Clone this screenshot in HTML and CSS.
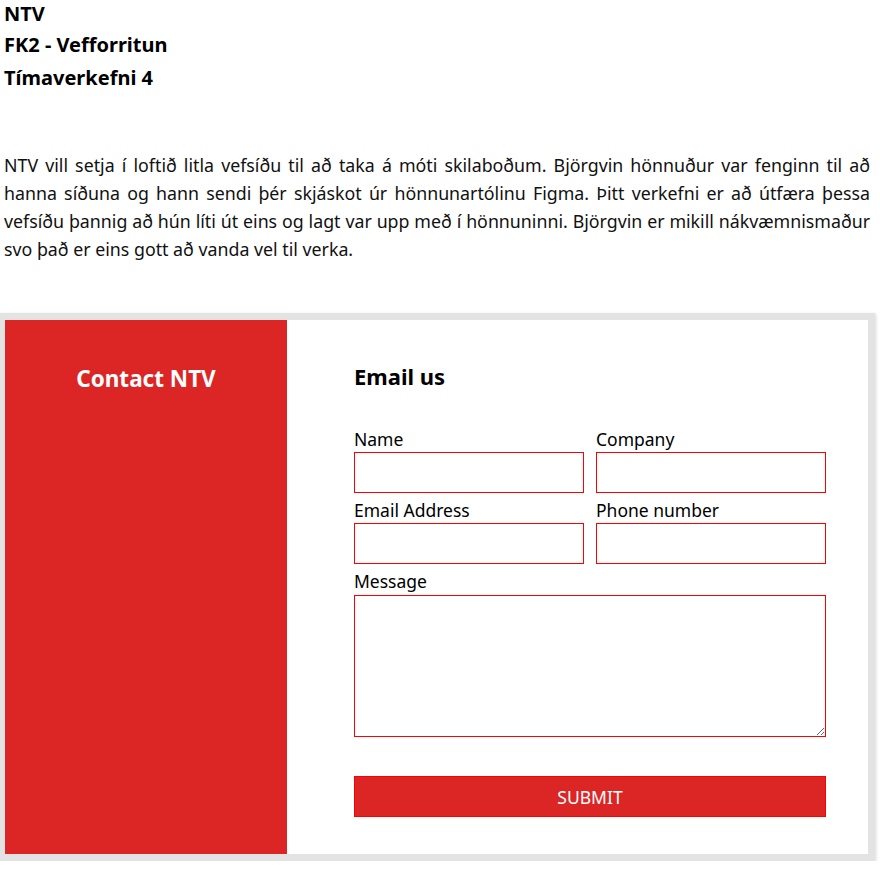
FILE: index.html
```html
<!DOCTYPE html>
<html lang="is">
<head>
<meta charset="utf-8">
<title>NTV</title>
<link rel="stylesheet" href="styles.css">
</head>
<body>
<header class="intro">
  <h1 class="title first">NTV</h1>
  <h2 class="title">FK2 - Vefforritun</h2>
  <h3 class="title">Tímaverkefni 4</h3>
  <p class="lead">NTV vill setja í loftið litla vefsíðu til að taka á móti skilaboðum. Björgvin hönnuður var fenginn til að hanna síðuna og hann sendi þér skjáskot úr hönnunartólinu Figma. Þitt verkefni er að útfæra þessa vefsíðu þannig að hún líti út eins og lagt var upp með í hönnuninni. Björgvin er mikill nákvæmnismaður svo það er eins gott að vanda vel til verka.</p>
</header>
<main class="card">
  <section class="side">
    <h2 class="side-title">Contact NTV</h2>
  </section>
  <section class="panel">
    <h2 class="panel-title">Email us</h2>
    <form class="form">
      <label class="field"><span class="label">Name</span><input class="input" type="text"></label>
      <label class="field"><span class="label">Company</span><input class="input" type="text"></label>
      <label class="field"><span class="label">Email Address</span><input class="input" type="email"></label>
      <label class="field"><span class="label">Phone number</span><input class="input" type="tel"></label>
      <label class="field wide"><span class="label">Message</span><textarea class="textarea"></textarea></label>
      <button class="submit" type="button">SUBMIT</button>
    </form>
  </section>
</main>
</body>
</html>
```
FILE: styles.css
```css
* { box-sizing: border-box; }
html, body { margin: 0; padding: 0; background: #fff; }
body {
  font-family: "Noto Sans", "Open Sans", sans-serif;
  color: #000;
  width: 880px;
}
.intro { padding: 0 10px 0 4px; }
.title {
  margin: 0;
  font-size: 20px;
  line-height: 33px;
  font-weight: 700;
}
.title.first {
  line-height: 27px;
  margin-bottom: 1px;
}
.lead {
  margin: 57px 0 0 0;
  font-size: 17.8px;
  line-height: 28px;
  text-align: justify;
  color: #111;
}
.card {
  margin-top: 50px;
  width: 875px;
  height: 548px;
  border: 7px solid #e3e3e3;
  border-left-width: 5px;
  box-shadow: 1px 1px 3px rgba(0,0,0,0.15);
  display: grid;
  grid-template-columns: 282px minmax(0, 1fr);
}
.side {
  background: #dc2626;
  display: flex;
  justify-content: center;
  padding-top: 44px;
}
.side-title {
  margin: 0;
  color: #fff;
  font-size: 22.5px;
  line-height: 30px;
  font-weight: 700;
}
.panel {
  background: #fff;
  padding: 41px 42px 0 67px;
  min-width: 0;
}
.panel-title {
  margin: 0;
  font-size: 22px;
  line-height: 30px;
  font-weight: 700;
}
.form {
  margin-top: 35px;
  display: grid;
  grid-template-columns: minmax(0, 1fr) minmax(0, 1fr);
  column-gap: 12px;
}
.field { display: flex; flex-direction: column; min-width: 0; }
.field.wide { grid-column: 1 / 3; }
.label {
  font-size: 17.5px;
  line-height: 26px;
  height: 26px;
}
.field.wide .label { height: 27px; }
.input {
  width: 100%;
  height: 41px;
  border: 1px solid #ff0000;
  margin: 0 0 4px 0;
  padding: 0 6px;
  font: inherit;
  outline: none;
  border-radius: 0;
}
.textarea {
  width: 100%;
  height: 142px;
  border: 1px solid #ff0000;
  margin: 0;
  font: inherit;
  outline: none;
  resize: vertical;
  border-radius: 0;
}
.submit {
  grid-column: 1 / 3;
  margin-top: 39px;
  height: 41px;
  background: #dc2626;
  border: 1px solid #ff0000;
  color: #fff;
  font-family: inherit;
  font-size: 17.5px;
  border-radius: 0;
}
```
